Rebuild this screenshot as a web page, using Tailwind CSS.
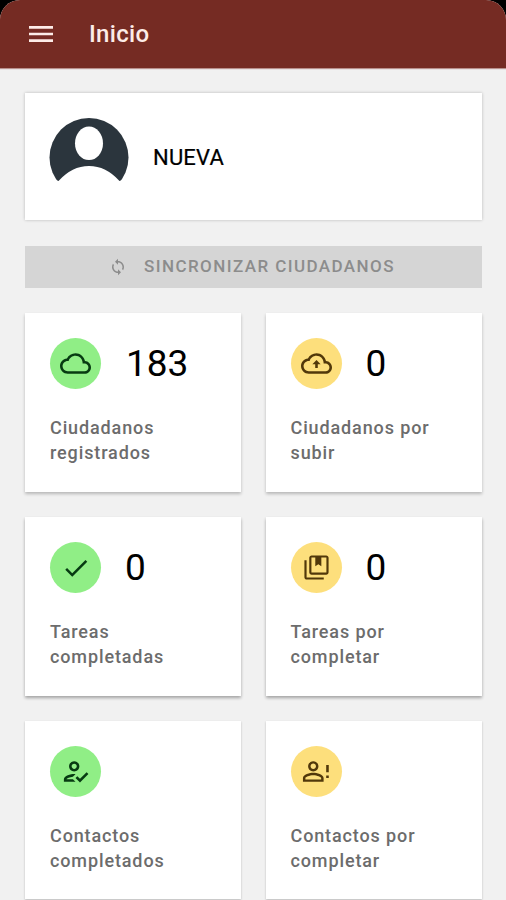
<!DOCTYPE html>
<html lang="es">
<head>
<meta charset="utf-8">
<meta name="viewport" content="width=device-width, initial-scale=1">
<title>Inicio</title>
<script src="https://cdn.jsdelivr.net/npm/@tailwindcss/browser@4"></script>
</head>
<body class="bg-black font-['Roboto',sans-serif]">
<div class="h-[900px] w-[506px] overflow-hidden rounded-t-[20px] bg-[#f1f1f1]">
  <header class="flex h-[68px] items-center bg-[#752b23] pl-[25px] text-[#fdece8] shadow-[0_1px_1px_#b9908c]">
    <svg class="size-[32px] shrink-0" viewBox="0 0 24 24" fill="currentColor"><path d="M3 18h18v-2H3v2zm0-5h18v-2H3v2zm0-7v2h18V6H3z"/></svg>
    <h1 class="ml-[32px] text-[24px] leading-8 font-medium tracking-[0.300px]">Inicio</h1>
  </header>
  <main class="pt-[25px] pr-[24px] pl-[25px]">
    <section class="flex h-[127px] items-start bg-white pt-[25px] pl-[24px] shadow-[0_0_3px_rgba(0,0,0,0.24)]">
      <svg class="size-[80px] shrink-0" viewBox="0 0 80 80">
        <circle cx="40" cy="39.5" r="39.5" fill="#2b353d"/>
        <ellipse cx="40" cy="25.3" rx="14" ry="16.8" fill="#fff"/>
        <path d="M9.500 63Q23 48 40 48T70.500 63L80 60V80H0V60Z" fill="#fff"/>
      </svg>
      <span class="mt-[24px] ml-[24px] text-[22px] leading-8 tracking-[0.200px] text-black [-webkit-text-stroke:0.2px_black]">NUEVA</span>
    </section>
    <button class="mt-[26px] flex h-[42px] w-full items-center bg-[#d5d5d5] pl-[84px] text-[#8c8c8c]">
      <svg class="size-[18px] shrink-0" viewBox="0 0 24 24" fill="currentColor"><path d="M12 4V1L8 5l4 4V6c3.310 0 6 2.690 6 6 0 1.010-.25 1.970-.7 2.800l1.460 1.460C19.540 15.030 20 13.570 20 12c0-4.420-3.580-8-8-8zm0 14c-3.310 0-6-2.690-6-6 0-1.010.25-1.970.7-2.800L5.240 7.740C4.460 8.970 4 10.430 4 12c0 4.420 3.580 8 8 8v3l4-4-4-4v3z"/></svg>
      <span class="ml-[17px] text-[17px] font-medium tracking-[1.420px] whitespace-nowrap">SINCRONIZAR CIUDADANOS</span>
    </button>
    <div class="mt-[25px] grid grid-cols-[216px_216px] gap-x-[25px] gap-y-[25px]">
      <article class="h-[179px] bg-white pt-[25px] pl-[25px] shadow-[0_2px_3px_rgba(0,0,0,0.24)]">
        <div class="flex items-center">
          <div class="flex size-[51px] items-center justify-center rounded-full bg-[#90ee86] text-[#073b12]"><svg class="size-[31px]" viewBox="0 0 24 24" fill="currentColor"><path d="M19.350 10.040C18.670 6.590 15.640 4 12 4 9.110 4 6.600 5.640 5.350 8.040 2.340 8.360 0 10.910 0 14c0 3.310 2.690 6 6 6h13c2.760 0 5-2.240 5-5 0-2.640-2.050-4.780-4.650-4.960zM19 18H6c-2.210 0-4-1.790-4-4s1.790-4 4-4h.71C7.370 7.690 9.480 6 12 6c3.040 0 5.500 2.460 5.500 5.500v.5H19c1.660 0 3 1.340 3 3s-1.340 3-3 3z"/></svg></div>
          <span class="ml-[25px] text-[37px] leading-[51px] text-black">183</span>
        </div>
        <p class="mt-[27px] text-[18px] leading-[24.500px] font-medium tracking-[0.880px] text-[#6c6c6c]">Ciudadanos<br>registrados</p>
      </article>
      <article class="h-[179px] bg-white pt-[25px] pl-[24.500px] shadow-[0_2px_3px_rgba(0,0,0,0.24)]">
        <div class="flex items-center">
          <div class="flex size-[51px] items-center justify-center rounded-full bg-[#fddf7c] text-[#51380a]"><svg class="size-[31px]" viewBox="0 0 24 24" fill="currentColor"><path d="M19.350 10.040C18.670 6.590 15.640 4 12 4 9.110 4 6.600 5.640 5.350 8.040 2.340 8.360 0 10.910 0 14c0 3.310 2.690 6 6 6h13c2.760 0 5-2.240 5-5 0-2.640-2.050-4.780-4.650-4.960zM19 18H6c-2.210 0-4-1.790-4-4s1.790-4 4-4h.71C7.370 7.690 9.480 6 12 6c3.040 0 5.500 2.460 5.500 5.500v.5H19c1.660 0 3 1.340 3 3s-1.340 3-3 3zM8.800 12.500H11V15.500h2v-3h2.200L12 9.200z"/></svg></div>
          <span class="ml-[24px] text-[37px] leading-[51px] text-black">0</span>
        </div>
        <p class="mt-[27px] text-[18px] leading-[24.500px] font-medium tracking-[0.880px] text-[#6c6c6c]">Ciudadanos por<br>subir</p>
      </article>
      <article class="h-[179px] bg-white pt-[25px] pl-[25px] shadow-[0_2px_3px_rgba(0,0,0,0.32)]">
        <div class="flex items-center">
          <div class="flex size-[51px] items-center justify-center rounded-full bg-[#90ee86] text-[#073b12]"><svg class="size-[30px]" viewBox="0 0 24 24" fill="currentColor"><path d="M9 16.170L4.830 12l-1.420 1.410L9 19 21 7l-1.410-1.410z"/></svg></div>
          <span class="ml-[24px] text-[37px] leading-[51px] text-black">0</span>
        </div>
        <p class="mt-[27px] text-[18px] leading-[24.500px] font-medium tracking-[0.880px] text-[#6c6c6c]">Tareas<br>completadas</p>
      </article>
      <article class="h-[179px] bg-white pt-[25px] pl-[24.500px] shadow-[0_2px_3px_rgba(0,0,0,0.32)]">
        <div class="flex items-center">
          <div class="flex size-[51px] items-center justify-center rounded-full bg-[#fddf7c] text-[#51380a]"><svg class="size-[29px]" viewBox="0 0 24 24" fill="currentColor"><path d="M3.800 6H2v14c0 1.100.9 2 2 2h14v-1.800H3.800V6z"/><path d="M20 2H8c-1.100 0-2 .9-2 2v12c0 1.100.9 2 2 2h12c1.100 0 2-.9 2-2V4c0-1.100-.9-2-2-2zm.2 14.200H7.800V3.800H11V11l2.500-1.600L16 11V3.800h4.200v12.400z"/></svg></div>
          <span class="ml-[24px] text-[37px] leading-[51px] text-black">0</span>
        </div>
        <p class="mt-[27px] text-[18px] leading-[24.500px] font-medium tracking-[0.880px] text-[#6c6c6c]">Tareas por<br>completar</p>
      </article>
      <article class="h-[178px] bg-white pt-[25px] pl-[25px] shadow-[0_1px_2px_rgba(0,0,0,0.24)]">
        <div class="flex size-[51px] items-center justify-center rounded-full bg-[#90ee86] text-[#073b12]"><svg class="size-[31px]" viewBox="0 0 24 24" fill="currentColor"><path d="M11 12c2.210 0 4-1.790 4-4s-1.790-4-4-4-4 1.790-4 4 1.790 4 4 4zm0-6c1.100 0 2 .9 2 2s-.9 2-2 2-2-.9-2-2 .9-2 2-2zM5 18c.2-.63 2.570-1.680 4.960-1.940l2.040-2c-.39-.04-.68-.06-1-.06-2.670 0-8 1.340-8 4v2h9l-2-2H5zm15.600-5.500l-5.130 5.170-2.070-2.080L12 17l3.470 3.500L22 13.910z"/></svg></div>
        <p class="mt-[27px] text-[18px] leading-[24.500px] font-medium tracking-[0.880px] text-[#6c6c6c]">Contactos<br>completados</p>
      </article>
      <article class="h-[178px] bg-white pt-[25px] pl-[24.500px] shadow-[0_1px_2px_rgba(0,0,0,0.24)]">
        <div class="flex size-[51px] items-center justify-center rounded-full bg-[#fddf7c] text-[#51380a]"><svg class="size-[31px]" viewBox="0 0 24 24" fill="currentColor"><path d="M9.500 5.900c1.160 0 2.100.94 2.100 2.100s-.94 2.100-2.100 2.100S7.400 9.160 7.400 8s.94-2.100 2.100-2.100m0 9c2.970 0 6.100 1.460 6.100 2.100v1.100H3.400V17c0-.64 3.130-2.100 6.100-2.100M9.500 4C7.290 4 5.500 5.790 5.500 8s1.790 4 4 4 4-1.790 4-4-1.790-4-4-4zm0 9c-2.670 0-8 1.340-8 4v3h16v-3c0-2.660-5.330-4-8-4zM19.500 7h2V12.500h-2zM19.500 15h2v2h-2z"/></svg></div>
        <p class="mt-[27px] text-[18px] leading-[24.500px] font-medium tracking-[0.880px] text-[#6c6c6c]">Contactos por<br>completar</p>
      </article>
    </div>
  </main>
</div>
</body>
</html>
